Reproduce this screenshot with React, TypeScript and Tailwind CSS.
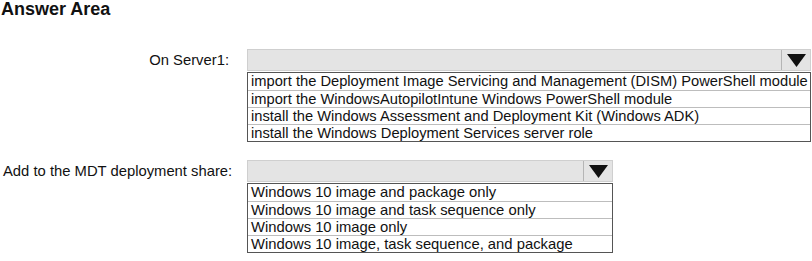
import React from "react";

const Arrow = () => (
  <svg width="19" height="13" viewBox="0 0 19 13">
    <polygon points="0,0 19,0 9.5,13" fill="#111" />
  </svg>
);

function Dropdown({ width, options, size }: { width: number; options: string[]; size: string }) {
  return (
    <div style={{ width }} className="flex flex-col">
      <div className="flex h-[22px] border border-[#cfcfcf] bg-[#e4e4e4]">
        <div className="flex-1" />
        <div className="flex w-[29px] items-center justify-center border-l border-[#b5b5b5]">
          <Arrow />
        </div>
      </div>
      <div className="mt-[1px] border border-[#555] bg-white">
        {options.map((o, i) => (
          <div
            key={i}
            className={`h-[17px] whitespace-nowrap pl-[3px] leading-[17px] text-[#111] ${size} ${i > 0 ? "border-t border-[#bdbdbd]" : ""}`}
          >
            {o}
          </div>
        ))}
      </div>
    </div>
  );
}

export default function App() {
  return (
    <div
      className="h-[261px] w-[812px] bg-white text-[#111]"
      style={{ fontFamily: '"Liberation Sans", Arial, sans-serif' }}
    >
      <div className="pl-[1px] text-[18px] font-bold leading-[18px]">Answer Area</div>
      <div className="mt-[31px] flex">
        <div className="flex h-[22px] w-[247px] items-center justify-end pr-[18px] text-[14.8px]">
          On Server1:
        </div>
        <Dropdown
          width={564}
          size="text-[14.7px]"
          options={[
            "import the Deployment Image Servicing and Management (DISM) PowerShell module",
            "import the WindowsAutopilotIntune Windows PowerShell module",
            "install the Windows Assessment and Deployment Kit (Windows ADK)",
            "install the Windows Deployment Services server role",
          ]}
        />
      </div>
      <div className="mt-[18px] flex">
        <div className="flex h-[22px] w-[247px] items-center pl-[3px] text-[14.8px]">
          Add to the MDT deployment share:
        </div>
        <Dropdown
          width={366}
          size="text-[14.8px]"
          options={[
            "Windows 10 image and package only",
            "Windows 10 image and task sequence only",
            "Windows 10 image only",
            "Windows 10 image, task sequence, and package",
          ]}
        />
      </div>
    </div>
  );
}
